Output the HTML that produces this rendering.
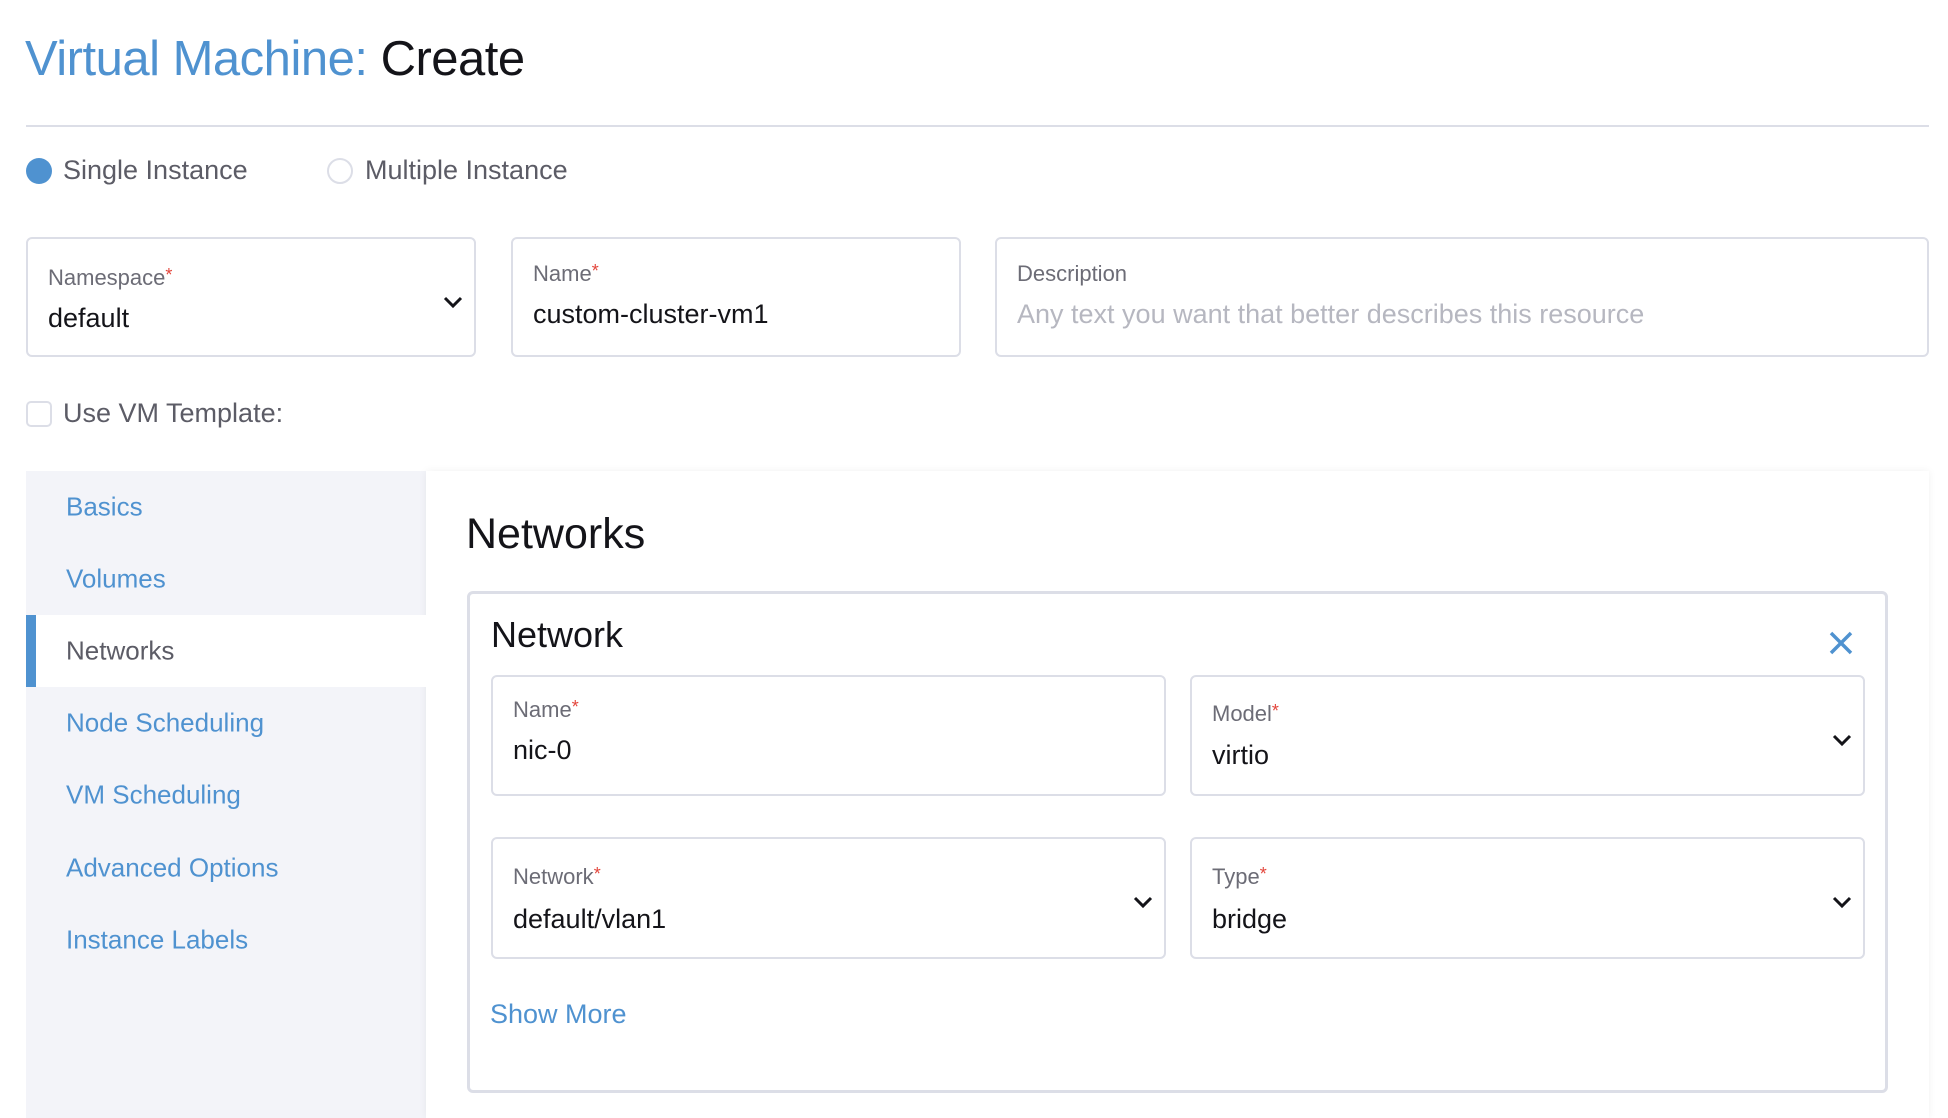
<!DOCTYPE html>
<html><head><meta charset="utf-8"><style>
*{box-sizing:border-box;margin:0;padding:0}
body{width:1948px;height:1118px;background:#fff;font-family:"Liberation Sans",sans-serif;position:relative;overflow:hidden;color:#141419}
.a{position:absolute;white-space:nowrap}
.blue{color:#4f92d0}
.box{position:absolute;border:2px solid #dcdee7;border-radius:6px;background:#fff}
.lbl{position:absolute;left:20px;font-size:22px;color:#6c6c76}
.lbl b{color:#e3453b;font-weight:normal;font-size:18px;vertical-align:top}
.val{position:absolute;left:20px;font-size:27px;color:#141419}
.chev{position:absolute;width:22px;height:14px}
.nav{position:absolute;left:66px;font-size:26px;color:#4f92d0;transform:translateY(-50%)}
</style></head><body>
<div class="a" style="left:25px;top:31px;font-size:49px;letter-spacing:-0.5px"><span class="blue">Virtual Machine:</span> Create</div>
<div class="a" style="left:26px;top:125px;width:1903px;height:2px;background:#dcdee7"></div>
<div class="a" style="left:26px;top:158px;width:26px;height:26px;border-radius:50%;background:#4f92d0"></div>
<div class="a" style="left:63px;top:155px;font-size:27px;color:#5c5c66">Single Instance</div>
<div class="a" style="left:327px;top:158px;width:26px;height:26px;border-radius:50%;border:2px solid #dcdee7"></div>
<div class="a" style="left:365px;top:155px;font-size:27px;color:#5c5c66">Multiple Instance</div>

<div class="box" style="left:26px;top:237px;width:450px;height:120px">
 <div class="lbl" style="top:26px">Namespace<b>*</b></div>
 <div class="val" style="top:64px">default</div>
 <svg class="chev" style="right:10px;top:56px" viewBox="0 0 22 14"><path d="M3 3l8 8 8-8" fill="none" stroke="#141419" stroke-width="3"/></svg>
</div>
<div class="box" style="left:511px;top:237px;width:450px;height:120px">
 <div class="lbl" style="top:22px">Name<b>*</b></div>
 <div class="val" style="top:60px">custom-cluster-vm1</div>
</div>
<div class="box" style="left:995px;top:237px;width:934px;height:120px">
 <div class="lbl" style="top:22px">Description</div>
 <div class="val" style="top:60px;color:#b6b7c0">Any text you want that better describes this resource</div>
</div>

<div class="a" style="left:26px;top:401px;width:26px;height:26px;border-radius:5px;border:2px solid #dcdee7"></div>
<div class="a" style="left:63px;top:398px;font-size:27px;color:#5c5c66">Use VM Template:</div>

<div class="a" style="left:26px;top:471px;width:1903px;height:647px;background:#f8f8fa"></div>
<div class="a" style="left:26px;top:471px;width:400px;height:647px;background:#f3f4f9"></div>
<div class="a" style="left:426px;top:471px;width:1503px;height:647px;background:#fff;box-shadow:0 0 8px rgba(0,0,0,0.06)"></div>
<div class="a" style="left:26px;top:615px;width:400px;height:72px;background:#fff"></div>
<div class="a" style="left:26px;top:615px;width:10px;height:72px;background:#4f92d0"></div>
<div class="nav" style="top:507px">Basics</div>
<div class="nav" style="top:579px">Volumes</div>
<div class="nav" style="top:651px;color:#5c5c66">Networks</div>
<div class="nav" style="top:723px">Node Scheduling</div>
<div class="nav" style="top:795px">VM Scheduling</div>
<div class="nav" style="top:868px">Advanced Options</div>
<div class="nav" style="top:940px">Instance Labels</div>

<div class="a" style="left:466px;top:510px;font-size:43px">Networks</div>
<div class="box" style="left:467px;top:591px;width:1421px;height:502px;border-width:3px">
 <div class="a" style="left:21px;top:20px;font-size:36px">Network</div>
 <svg class="a" style="left:1358px;top:36px" width="26" height="26" viewBox="0 0 26 26"><path d="M3 3l20 20M23 3L3 23" stroke="#4f92d0" stroke-width="3.5"/></svg>
 <div class="box" style="left:21px;top:81px;width:675px;height:121px">
  <div class="lbl" style="top:20px">Name<b>*</b></div>
  <div class="val" style="top:58px">nic-0</div>
 </div>
 <div class="box" style="left:720px;top:81px;width:675px;height:121px">
  <div class="lbl" style="top:24px">Model<b>*</b></div>
  <div class="val" style="top:63px">virtio</div>
  <svg class="chev" style="right:10px;top:56px" viewBox="0 0 22 14"><path d="M3 3l8 8 8-8" fill="none" stroke="#141419" stroke-width="3"/></svg>
 </div>
 <div class="box" style="left:21px;top:243px;width:675px;height:122px">
  <div class="lbl" style="top:25px">Network<b>*</b></div>
  <div class="val" style="top:65px">default/vlan1</div>
  <svg class="chev" style="right:10px;top:56px" viewBox="0 0 22 14"><path d="M3 3l8 8 8-8" fill="none" stroke="#141419" stroke-width="3"/></svg>
 </div>
 <div class="box" style="left:720px;top:243px;width:675px;height:122px">
  <div class="lbl" style="top:25px">Type<b>*</b></div>
  <div class="val" style="top:65px">bridge</div>
  <svg class="chev" style="right:10px;top:56px" viewBox="0 0 22 14"><path d="M3 3l8 8 8-8" fill="none" stroke="#141419" stroke-width="3"/></svg>
 </div>
 <div class="a blue" style="left:20px;top:405px;font-size:27px">Show More</div>
</div>
</body></html>
